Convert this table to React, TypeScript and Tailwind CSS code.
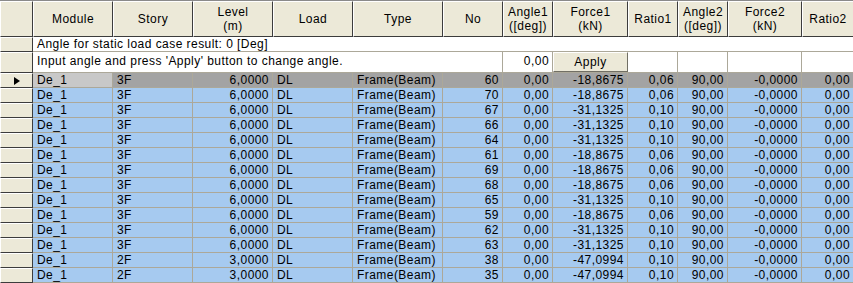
import React from "react";

type Col = {
    label: string[];
    w: string;
    right?: boolean;
};

// Column widths measured off the grid lines (cell width includes its right line).
const COLS: Col[] = [
    { label: ["Module"], w: "w-[80px]" },
    { label: ["Story"], w: "w-[80px]" },
    { label: ["Level", "(m)"], w: "w-[80px]", right: true },
    { label: ["Load"], w: "w-[80px]" },
    { label: ["Type"], w: "w-[90px]" },
    { label: ["No"], w: "w-[60px]", right: true },
    { label: ["Angle1", "([deg])"], w: "w-[50px]", right: true },
    { label: ["Force1", "(kN)"], w: "w-[75px]", right: true },
    { label: ["Ratio1"], w: "w-[50px]", right: true },
    { label: ["Angle2", "([deg])"], w: "w-[50px]", right: true },
    { label: ["Force2", "(kN)"], w: "w-[74px]", right: true },
    { label: ["Ratio2"], w: "w-[52px]", right: true },
];

const ROWS: [string, string, string][] = [
    ["60", "3F", "-18,8675"],
    ["70", "3F", "-18,8675"],
    ["67", "3F", "-31,1325"],
    ["66", "3F", "-31,1325"],
    ["64", "3F", "-31,1325"],
    ["61", "3F", "-18,8675"],
    ["69", "3F", "-18,8675"],
    ["68", "3F", "-18,8675"],
    ["65", "3F", "-31,1325"],
    ["59", "3F", "-18,8675"],
    ["62", "3F", "-31,1325"],
    ["63", "3F", "-31,1325"],
    ["38", "2F", "-47,0994"],
    ["35", "2F", "-47,0994"],
];

function RowHeader({ h, current }: { h: string; current?: boolean }) {
    return (
        <div
            className={`${h} w-[33px] shrink-0 flex items-center justify-center bg-[#ece9d8] border-t border-l border-t-white border-l-white border-r border-b border-r-[#3c3c3c] border-b-[#3c3c3c]`}
        >
            {current && (
                <svg width="8" height="10" viewBox="0 0 8 10" className="ml-[1px]">
                    <polygon points="1,1 7,5 1,9" fill="#000" />
                </svg>
            )}
        </div>
    );
}

function DataRow({ row, current }: { row: [string, string, string]; current: boolean }) {
    const [no, story, force1] = row;
    const level = story === "2F" ? "3,0000" : "6,0000";
    const ratio1 = force1 === "-18,8675" ? "0,06" : "0,10";
    const values = ["De_1", story, level, "DL", "Frame(Beam)", no, "0,00", force1, ratio1, "90,00", "-0,0000", "0,00"];
    return (
        <div className="flex h-[15px]">
            <RowHeader h="h-[15px]" current={current} />
            {COLS.map((c, i) => (
                <div
                    key={i}
                    className={`${c.w} shrink-0 h-[15px] border-r border-b border-[#aca899] overflow-hidden whitespace-nowrap leading-[14px] ${
                        c.right ? "text-right pr-[3px]" : "text-left pl-[4px]"
                    } ${current ? (i === 0 ? "bg-[#c8c8c8]" : "bg-[#a3a3a3]") : "bg-[#a6caf0]"}`}
                >
                    {values[i]}
                </div>
            ))}
        </div>
    );
}

export default function App() {
    return (
        <div
            className="w-[853px] h-[283px] overflow-hidden bg-white text-black text-[12px] tracking-[0.45px]"
            style={{ fontFamily: '"Liberation Sans", Arial, sans-serif' }}
        >
            <div className="w-[900px]">
                {/* header */}
                <div className="flex h-[37px] border-t border-[#8a8a8a]">
                    <div className="w-[33px] shrink-0 h-[36px] bg-[#ece9d8] border-t border-l border-white border-r border-b border-r-[#3c3c3c] border-b-[#3c3c3c]" />
                    {COLS.map((c, i) => (
                        <div
                            key={i}
                            className={`${c.w} shrink-0 h-[36px] bg-[#ece9d8] border-t border-l border-white border-r border-b border-r-[#3c3c3c] border-b-[#3c3c3c] flex flex-col items-center justify-center leading-[14px]`}
                        >
                            {c.label.map((l) => (
                                <span key={l}>{l}</span>
                            ))}
                        </div>
                    ))}
                </div>

                {/* info row */}
                <div className="flex h-[15px]">
                    <RowHeader h="h-[15px]" />
                    <div className="flex-1 h-[15px] border-b border-[#aca899] pl-[4px] leading-[14px] whitespace-nowrap">
                        Angle for static load case result: 0 [Deg]
                    </div>
                </div>

                {/* input row */}
                <div className="flex h-[21px]">
                    <RowHeader h="h-[21px]" />
                    <div className="w-[470px] shrink-0 h-[21px] border-r border-b border-[#aca899] pl-[4px] leading-[19px] whitespace-nowrap">
                        Input angle and press 'Apply' button to change angle.
                    </div>
                    <div className="w-[50px] shrink-0 h-[21px] border-r border-b border-[#aca899] pr-[3px] text-right leading-[19px]">
                        0,00
                    </div>
                    <div className="w-[75px] shrink-0 h-[21px] border-b border-[#aca899]">
                        <button className="w-[75px] h-[20px] bg-[#ece9d8] border-t border-l border-white border-r border-b border-r-[#716f64] border-b-[#716f64] leading-[17px] text-center tracking-[0.45px]">
                            Apply
                        </button>
                    </div>
                    <div className="w-[50px] shrink-0 h-[21px] border-r border-b border-[#aca899]" />
                    <div className="w-[50px] shrink-0 h-[21px] border-r border-b border-[#aca899]" />
                    <div className="w-[74px] shrink-0 h-[21px] border-r border-b border-[#aca899]" />
                    <div className="w-[52px] shrink-0 h-[21px] border-r border-b border-[#aca899]" />
                </div>

                {ROWS.map((r, i) => (
                    <DataRow key={i} row={r} current={i === 0} />
                ))}
            </div>
        </div>
    );
}
